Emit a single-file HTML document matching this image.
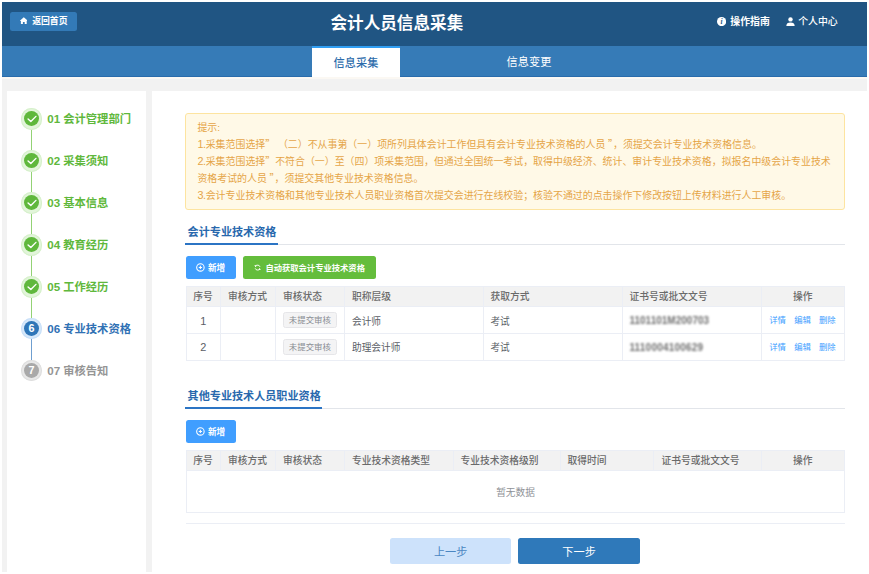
<!DOCTYPE html>
<html lang="zh-CN">
<head>
<meta charset="utf-8">
<title>会计人员信息采集</title>
<style>
html,body{margin:0;padding:0;}
body{width:869px;height:574px;overflow:hidden;background:#fff;position:relative;
  font-family:"Liberation Sans","Noto Sans CJK SC",sans-serif;-webkit-font-smoothing:antialiased;}
#page{position:absolute;left:2px;top:2px;width:865px;height:570px;background:#f2f2f2;overflow:hidden;}
#page *{box-sizing:border-box;}
.abs{position:absolute;white-space:nowrap;}
/* header */
#hdr{position:absolute;left:0;top:0;width:865px;height:44px;background:#205583;}
#back{position:absolute;left:8px;top:9.5px;width:66.5px;height:19.5px;background:#337ab7;border-radius:2.5px;}
#back span{position:absolute;left:22.2px;top:0;line-height:19.5px;font-size:8.85px;font-weight:700;color:#fff;}
#title{position:absolute;left:328.5px;top:8.9px;line-height:26px;font-size:16.6px;font-weight:700;color:#fff;}
.toplink{position:absolute;top:10px;line-height:19px;font-size:9.9px;color:#fff;}
/* tabs */
#tabs{position:absolute;left:0;top:44px;width:865px;height:31px;background:#367bb7;border-bottom:1px solid #2a6cab;}
#tabA{position:absolute;left:310px;top:0;width:88px;height:31px;background:#fff;border-top:2px solid #309ef2;}
#tabA span{position:absolute;left:0;right:0;text-align:center;top:4.5px;line-height:20px;font-size:11.2px;font-weight:500;color:#2d6cab;}
#tabB{position:absolute;left:482px;width:90px;text-align:center;top:6.4px;line-height:20px;font-size:11.2px;color:#fff;}
#tabline{position:absolute;left:0;top:75px;width:865px;height:1.5px;background:#fbf8f3;}
/* panels */
#side{position:absolute;left:5px;top:89px;width:139px;height:481px;background:#fff;}
#main{position:absolute;left:150px;top:89px;width:715px;height:481px;background:#fff;}
/* steps */
.step{position:absolute;left:18.5px;width:21.8px;height:21.8px;border-radius:50%;margin-top:-0.2px;}
.step i{position:absolute;left:3.5px;top:3.5px;width:14.8px;height:14.8px;border-radius:50%;}
.step svg{position:absolute;left:3.5px;top:3.5px;width:14.8px;height:14.8px;}
.step b{position:absolute;left:3.5px;top:3.5px;width:14.8px;line-height:14.8px;text-align:center;font-size:10.8px;color:#fff;font-weight:700;}
.sg{background:#e2f5da;box-shadow:inset 0 0 0 1px #d6f0cb;} .sg i{background:#5fb83c;}
.sb{background:#d6e8fa;box-shadow:inset 0 0 0 1px #c9e0f8;} .sb i{background:#2f76b8;}
.sx{background:#e8e8e8;box-shadow:inset 0 0 0 1px #dedede;} .sx i{background:#a9a9a9;}
.sl{position:absolute;left:28.7px;width:1px;}
.st{position:absolute;left:45.2px;line-height:20px;font-size:11.3px;font-weight:700;white-space:nowrap;}
/* alert */
#alert{position:absolute;left:183px;top:111px;width:660px;height:97px;background:#fff9e7;border:1px solid #fde4a0;border-radius:3px;}
#alert div{position:absolute;left:11.4px;line-height:17px;font-size:9.94px;color:#e5a547;white-space:nowrap;}
/* section */
.sec{position:absolute;left:183.5px;width:659px;height:1px;background:#e2e5ea;}
.secu{position:absolute;left:183.3px;height:2px;background:#2b74c4;}
.sect{position:absolute;left:185.6px;line-height:20px;font-size:11.1px;font-weight:700;color:#2868ad;white-space:nowrap;}
.btn{position:absolute;height:22.5px;border-radius:2.5px;color:#fff;font-size:8.5px;font-weight:700;line-height:22.5px;white-space:nowrap;}
.btn span{position:absolute;top:0.6px;}
.btn svg{position:absolute;}
/* table */
.tbl{position:absolute;border:1px solid #ebeef5;background:#fff;}
.th{position:absolute;top:0;height:20.5px;background:#f2f2f2;border-right:1px solid #ebeef5;border-bottom:1px solid #ebeef5;}
.tht{position:absolute;line-height:20px;font-size:9.75px;font-weight:500;color:#6a6a6a;white-space:nowrap;}
.hl{position:absolute;left:0;width:100%;height:1px;background:#ebeef5;}
.vl{position:absolute;width:1px;background:#ebeef5;}
.td{position:absolute;line-height:20px;font-size:9.7px;color:#5a5e66;white-space:nowrap;}
.tag{position:absolute;width:53.4px;height:16.4px;border:1px solid #e6e6e9;background:#f4f4f5;border-radius:2.5px;color:#898c93;font-size:8.45px;line-height:14.4px;text-align:center;white-space:nowrap;}
.lk{position:absolute;line-height:20px;font-size:8.4px;color:#409eff;white-space:nowrap;}
.blur{position:absolute;line-height:20px;font-size:9.9px;font-weight:700;color:#6e6e6e;white-space:nowrap;filter:blur(1.15px);transform:scaleY(1.08);}

.thbg{position:absolute;background:#f2f2f2;}
.hl2{position:absolute;height:1px;background:#ebeef5;}
.nbtn{position:absolute;top:535.6px;width:121.4px;height:26.7px;border-radius:2.5px;text-align:center;line-height:28px;font-size:11.2px;white-space:nowrap;}
.q{font-family:"Noto Sans CJK SC",sans-serif;line-height:0;}
.st .n{font-size:11.6px;line-height:0;}
.num{font-size:10.9px;}
.d{font-size:10.8px;line-height:0;letter-spacing:-0.35px;}
</style>
</head>
<body>
<div id="page">
  <div id="hdr">
    <div id="back">
      <svg class="abs" style="left:9.6px;top:5.2px;width:7.6px;height:7.6px" viewBox="0 0 16 16"><path d="M8 0.4 L15.7 7.4 Q16 8.5 14.9 8.5 L14.1 8.5 L14.1 15.6 L9.9 15.6 L9.9 10.6 L6.1 10.6 L6.1 15.6 L1.9 15.6 L1.9 8.5 L1.1 8.5 Q0 8.5 0.3 7.4 Z" fill="#fff"/></svg>
      <span>返回首页</span>
    </div>
    <div id="title">会计人员信息采集</div>
    <svg class="abs" style="left:715.1px;top:14.8px;width:9.2px;height:9.2px" viewBox="0 0 16 16"><circle cx="8" cy="8" r="8" fill="#fff"/><text x="7.7" y="12.6" font-family="Liberation Serif, serif" font-style="italic" font-weight="700" font-size="13" text-anchor="middle" fill="#205583">i</text></svg>
    <div class="toplink" style="left:728.3px;font-weight:700">操作指南</div>
    <svg class="abs" style="left:783.5px;top:14.7px;width:9px;height:9px" viewBox="0 0 16 16"><circle cx="8" cy="4.3" r="3.9" fill="#fff"/><path d="M0.6 16 C0.6 11.4 3.2 9.6 8 9.6 C12.8 9.6 15.4 11.4 15.4 16 Z" fill="#fff"/></svg>
    <div class="toplink" style="left:796.2px;font-weight:500">个人中心</div>
  </div>
  <div id="tabs">
    <div id="tabA"><span>信息采集</span></div>
    <div id="tabB">信息变更</div>
  </div>
  <div id="tabline"></div>
  <div id="side"></div>
  <div id="main"></div>

  <!-- STEPS -->
  <div class="sl" style="top:127.00px;height:21.55px;background:#93d275"></div>
  <div class="step sg" style="top:106.10px"><i></i><svg viewBox="0 0 16 16"><path d="M4.4 8.6 L7.4 11.4 L12.9 5.8" fill="none" stroke="#fff" stroke-width="1.5" stroke-linecap="round" stroke-linejoin="round"/></svg></div>
  <div class="st" style="top:106.80px;color:#5fb83c"><span class="n">01</span> 会计管理部门</div>
  <div class="sl" style="top:168.95px;height:21.55px;background:#93d275"></div>
  <div class="step sg" style="top:148.05px"><i></i><svg viewBox="0 0 16 16"><path d="M4.4 8.6 L7.4 11.4 L12.9 5.8" fill="none" stroke="#fff" stroke-width="1.5" stroke-linecap="round" stroke-linejoin="round"/></svg></div>
  <div class="st" style="top:148.75px;color:#5fb83c"><span class="n">02</span> 采集须知</div>
  <div class="sl" style="top:210.90px;height:21.55px;background:#93d275"></div>
  <div class="step sg" style="top:190.00px"><i></i><svg viewBox="0 0 16 16"><path d="M4.4 8.6 L7.4 11.4 L12.9 5.8" fill="none" stroke="#fff" stroke-width="1.5" stroke-linecap="round" stroke-linejoin="round"/></svg></div>
  <div class="st" style="top:190.70px;color:#5fb83c"><span class="n">03</span> 基本信息</div>
  <div class="sl" style="top:252.85px;height:21.55px;background:#93d275"></div>
  <div class="step sg" style="top:231.95px"><i></i><svg viewBox="0 0 16 16"><path d="M4.4 8.6 L7.4 11.4 L12.9 5.8" fill="none" stroke="#fff" stroke-width="1.5" stroke-linecap="round" stroke-linejoin="round"/></svg></div>
  <div class="st" style="top:232.65px;color:#5fb83c"><span class="n">04</span> 教育经历</div>
  <div class="sl" style="top:294.80px;height:21.55px;background:#93d275"></div>
  <div class="step sg" style="top:273.90px"><i></i><svg viewBox="0 0 16 16"><path d="M4.4 8.6 L7.4 11.4 L12.9 5.8" fill="none" stroke="#fff" stroke-width="1.5" stroke-linecap="round" stroke-linejoin="round"/></svg></div>
  <div class="st" style="top:274.60px;color:#5fb83c"><span class="n">05</span> 工作经历</div>
  <div class="sl" style="top:336.75px;height:21.55px;background:#6f9fd0"></div>
  <div class="step sb" style="top:315.85px"><i></i><b>6</b></div>
  <div class="st" style="top:316.55px;color:#3071b4"><span class="n">06</span> 专业技术资格</div>
  <div class="step sx" style="top:357.80px"><i></i><b>7</b></div>
  <div class="st" style="top:358.50px;color:#959595"><span class="n">07</span> 审核告知</div>

  <!-- ALERT -->
  <div id="alert">
    <div style="top:5.2px">提示:</div>
    <div style="top:22.1px"><span class="d">1.</span>采集范围选择<span class="q">”</span> （二）不从事第（一）项所列具体会计工作但具有会计专业技术资格的人员 <span class="q">”</span>，须提交会计专业技术资格信息。</div>
    <div style="top:39px"><span class="d">2.</span>采集范围选择<span class="q">”</span>不符合（一）至（四）项采集范围，但通过全国统一考试，取得中级经济、统计、审计专业技术资格，拟报名中级会计专业技术</div>
    <div style="top:55.9px">资格考试的人员 <span class="q">”</span>，须提交其他专业技术资格信息。</div>
    <div style="top:73.2px"><span class="d">3.</span>会计专业技术资格和其他专业技术人员职业资格首次提交会进行在线校验；核验不通过的点击操作下修改按钮上传材料进行人工审核。</div>
  </div>

  <!-- MAIN CONTENT -->
  <div class="sect" style="top:220.2px">会计专业技术资格</div>
  <div class="sec" style="top:242px"></div>
  <div class="secu" style="top:241px;width:92.4px"></div>
  <div class="btn" style="left:183.6px;top:254px;width:50.3px;background:#409eff;font-size:8.6px"><svg style="left:10.9px;top:7.1px;width:8.8px;height:8.8px" viewBox="0 0 16 16"><circle cx="8" cy="8" r="6.8" fill="none" stroke="#fff" stroke-width="1.9"/><path d="M8 5V11M5 8H11" stroke="#fff" stroke-width="1.9" fill="none"/></svg><span style="left:22.4px">新增</span></div>
  <div class="btn" style="left:241.2px;top:254px;width:132.8px;background:#64bd3c;font-size:8.3px"><svg style="left:11.1px;top:7.8px;width:7.2px;height:7.2px" viewBox="0 0 16 16"><path d="M13.4 6.4A5.7 5.7 0 0 0 3.4 4.8M2.6 9.6A5.7 5.7 0 0 0 12.6 11.2" fill="none" stroke="#fff" stroke-width="2"/><path d="M0.8 2.4L3.4 7.2L6.4 3.2ZM15.2 13.6L12.6 8.8L9.6 12.8Z" fill="#fff"/></svg><span style="left:22.2px">自动获取会计专业技术资格</span></div>
  <div class="tbl" style="left:184px;top:284px;width:659px;height:75px"></div>
  <div class="thbg" style="left:185px;width:657px;top:285px;height:19px"></div>
  <div class="vl" style="left:218px;top:285px;height:73px"></div>
  <div class="vl" style="left:273px;top:285px;height:73px"></div>
  <div class="vl" style="left:342px;top:285px;height:73px"></div>
  <div class="vl" style="left:481px;top:285px;height:73px"></div>
  <div class="vl" style="left:620px;top:285px;height:73px"></div>
  <div class="vl" style="left:759px;top:285px;height:73px"></div>
  <div class="hl2" style="left:185px;width:657px;top:304px"></div>
  <div class="hl2" style="left:185px;width:657px;top:331px"></div>
  <div class="tht" style="left:171.1px;width:60px;text-align:center;top:285px">序号</div>
  <div class="tht" style="left:226px;top:285px">审核方式</div>
  <div class="tht" style="left:281px;top:285px">审核状态</div>
  <div class="tht" style="left:350px;top:285px">职称层级</div>
  <div class="tht" style="left:488.4px;top:285px">获取方式</div>
  <div class="tht" style="left:627.5px;top:285px">证书号或批文文号</div>
  <div class="tht" style="left:770.8px;width:60px;text-align:center;top:285px">操作</div>
  <div class="td num" style="left:171.2px;width:60px;text-align:center;top:308.6px">1</div>
  <div class="tag" style="left:281.2px;top:310px">未提交审核</div>
  <div class="td" style="left:350px;top:309.6px">会计师</div>
  <div class="td" style="left:488.4px;top:309.6px">考试</div>
  <div class="blur" style="left:627.4px;top:309.2px;letter-spacing:0.09px">1101101M200703</div>
  <div class="lk" style="left:767.2px;top:308.1px">详情</div>
  <div class="lk" style="left:792.2px;top:308.1px">编辑</div>
  <div class="lk" style="left:817px;top:308.1px">删除</div>
  <div class="td num" style="left:171.2px;width:60px;text-align:center;top:335.3px">2</div>
  <div class="tag" style="left:281.2px;top:337px">未提交审核</div>
  <div class="td" style="left:350px;top:336.3px">助理会计师</div>
  <div class="td" style="left:488.4px;top:336.3px">考试</div>
  <div class="blur" style="left:627.4px;top:335.9px;letter-spacing:0.28px">1110004100629</div>
  <div class="lk" style="left:767.2px;top:334.8px">详情</div>
  <div class="lk" style="left:792.2px;top:334.8px">编辑</div>
  <div class="lk" style="left:817px;top:334.8px">删除</div>
  <div class="sect" style="top:384px">其他专业技术人员职业资格</div>
  <div class="sec" style="top:406px"></div>
  <div class="secu" style="top:405px;width:136.5px"></div>
  <div class="btn" style="left:183.6px;top:418.2px;width:50.3px;background:#409eff;font-size:8.6px"><svg style="left:10.9px;top:7.1px;width:8.8px;height:8.8px" viewBox="0 0 16 16"><circle cx="8" cy="8" r="6.8" fill="none" stroke="#fff" stroke-width="1.9"/><path d="M8 5V11M5 8H11" stroke="#fff" stroke-width="1.9" fill="none"/></svg><span style="left:22.4px">新增</span></div>
  <div class="tbl" style="left:184px;top:448px;width:659px;height:63px"></div>
  <div class="thbg" style="left:185px;width:657px;top:449px;height:19px"></div>
  <div class="vl" style="left:218px;top:449px;height:19px"></div>
  <div class="vl" style="left:273px;top:449px;height:19px"></div>
  <div class="vl" style="left:342px;top:449px;height:19px"></div>
  <div class="vl" style="left:451px;top:449px;height:19px"></div>
  <div class="vl" style="left:558px;top:449px;height:19px"></div>
  <div class="vl" style="left:651px;top:449px;height:19px"></div>
  <div class="vl" style="left:759px;top:449px;height:19px"></div>
  <div class="hl2" style="left:185px;width:657px;top:468px"></div>
  <div class="tht" style="left:171.1px;width:60px;text-align:center;top:449.2px">序号</div>
  <div class="tht" style="left:226px;top:449.2px">审核方式</div>
  <div class="tht" style="left:281px;top:449.2px">审核状态</div>
  <div class="tht" style="left:350px;top:449.2px">专业技术资格类型</div>
  <div class="tht" style="left:458.6px;top:449.2px">专业技术资格级别</div>
  <div class="tht" style="left:565.4px;top:449.2px">取得时间</div>
  <div class="tht" style="left:659.4px;top:449.2px">证书号或批文文号</div>
  <div class="tht" style="left:770.8px;width:60px;text-align:center;top:449.2px">操作</div>
  <div class="td" style="left:463.5px;width:100px;text-align:center;top:480.7px;color:#8f9297">暂无数据</div>
  <div class="sec" style="top:521px;background:#ebeef5"></div>
  <div class="nbtn" style="left:388px;background:#cde2fb;color:#4a86c2">上一步</div>
  <div class="nbtn" style="left:516.4px;background:#2f79ba;color:#fff">下一步</div>
</div>
</body>
</html>
